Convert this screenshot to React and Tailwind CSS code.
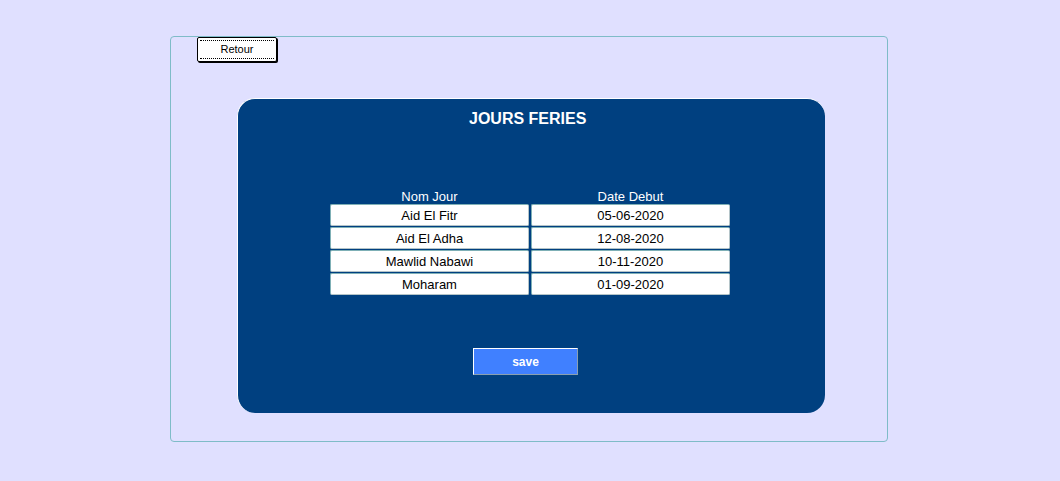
import React from "react";

const rows = [
  { name: "Aid El Fitr", date: "05-06-2020" },
  { name: "Aid El Adha", date: "12-08-2020" },
  { name: "Mawlid Nabawi", date: "10-11-2020" },
  { name: "Moharam", date: "01-09-2020" },
];

function Cell({ children }) {
  return (
    <div className="w-[199px] h-[22px] bg-white rounded-[2px] border border-[#7fb0b6] border-b-[#b4c4c8] border-r-[#b4c4c8] flex items-center justify-center text-[13px] text-black leading-none">
      {children}
    </div>
  );
}

export default function App() {
  return (
    <div className="w-[1060px] h-[481px] bg-[#e0e0ff] pt-[36px] pl-[170px]" style={{ fontFamily: "'Liberation Sans', Arial, sans-serif" }}>
      <div className="w-[718px] h-[406px] border border-[#7fbcc8] rounded-[4px] flex flex-col">
        <div className="pl-[26px] h-[26px] flex items-start">
          <button className="block w-[80px] h-[25px] bg-white border border-black rounded-[2px] shadow-[1px_1px_0_#000] px-[2px] py-[2px]">
            <div className="h-full border-y border-dotted border-black flex items-center justify-center text-[11px] text-black leading-none">
              Retour
            </div>
          </button>
        </div>
        <div className="ml-[66px] mt-[35px] w-[588px] h-[315px] bg-[#004080] rounded-[18px] border-t border-l border-white flex flex-col">
          <div className="mt-[12px] pl-[231px] text-white font-bold text-[16px] leading-none">JOURS FERIES</div>
          <div className="mt-[63px] ml-[92px] flex gap-[2px]">
            <div className="flex flex-col gap-[1px]">
              <div className="text-white text-[13px] leading-none text-center h-[14px] mb-[-1px]">Nom Jour</div>
              {rows.map((r) => (
                <Cell key={r.name}>{r.name}</Cell>
              ))}
            </div>
            <div className="flex flex-col gap-[1px]">
              <div className="text-white text-[13px] leading-none text-center h-[14px] mb-[-1px]">Date Debut</div>
              {rows.map((r) => (
                <Cell key={r.date}>{r.date}</Cell>
              ))}
            </div>
          </div>
          <button className="mt-[53px] ml-[235px] w-[105px] h-[27px] bg-[#4080ff] border border-white border-r-[#8aa0b0] border-b-[#8aa0b0] text-white font-bold text-[12px] leading-none">
            save
          </button>
        </div>
      </div>
    </div>
  );
}
